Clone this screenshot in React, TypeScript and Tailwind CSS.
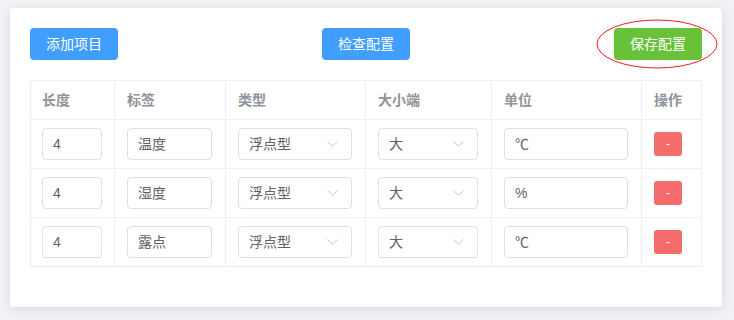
import React from "react";

const rows = [
  { len: "4", label: "温度", type: "浮点型", endian: "大", unit: "℃" },
  { len: "4", label: "湿度", type: "浮点型", endian: "大", unit: "%" },
  { len: "4", label: "露点", type: "浮点型", endian: "大", unit: "℃" },
];

function Chevron() {
  return (
    <svg width="11" height="6" viewBox="0 0 11 6" fill="none" className="shrink-0">
      <path d="M0.5 0.5 L5.5 5.2 L10.5 0.5" stroke="#c0c4cc" strokeWidth="1" />
    </svg>
  );
}

function Input({ value, w }: { value: string; w: string }) {
  return (
    <div className={`${w} h-8 border border-[#dcdfe6] rounded-[4px] flex items-center pl-[10px] text-sm text-[#606266] bg-white`}>
      {value}
    </div>
  );
}

function Select({ value, w }: { value: string; w: string }) {
  return (
    <div className={`${w} h-8 border border-[#dcdfe6] rounded-[4px] flex items-center justify-between pl-[10px] pr-[13px] text-sm text-[#606266] bg-white`}>
      <span>{value}</span>
      <Chevron />
    </div>
  );
}

const cell = "border-r border-b border-[#ebeef5] flex items-center pl-3";

export default function App() {
  return (
    <div className="w-[734px] h-[320px] bg-[#f0f2f5] pt-2 pl-[10px] font-['Liberation_Sans','Noto_Sans_CJK_SC',sans-serif]">
      <div className="relative w-[712px] h-[299px] bg-white rounded-[4px] shadow-[0_2px_12px_0_rgba(0,0,0,0.1)] p-5">
        <div className="flex justify-between items-center">
          <button className="w-[88px] h-8 rounded-[4px] bg-[#409eff] text-white text-sm">添加项目</button>
          <button className="w-[88px] h-8 rounded-[4px] bg-[#409eff] text-white text-sm">检查配置</button>
          <button className="w-[88px] h-8 rounded-[4px] bg-[#67c23a] text-white text-sm">保存配置</button>
        </div>
        <div className="mt-5 grid grid-cols-[84px_111px_140px_126px_150px_60px] border-t border-l border-[#ebeef5]">
          {["长度", "标签", "类型", "大小端", "单位", "操作"].map((h, i) => (
            <div key={h} className={`${cell} h-[39px] text-sm font-bold text-[#909399] ${i === 0 ? "pl-[11px]" : ""}`}>
              {h}
            </div>
          ))}
          {rows.map((r, idx) => (
            <React.Fragment key={idx}>
              <div className={`${cell} h-[49px] pl-[11px]`}>
                <Input value={r.len} w="w-[60px]" />
              </div>
              <div className={`${cell} h-[49px]`}>
                <Input value={r.label} w="w-[85px]" />
              </div>
              <div className={`${cell} h-[49px]`}>
                <Select value={r.type} w="w-[114px]" />
              </div>
              <div className={`${cell} h-[49px]`}>
                <Select value={r.endian} w="w-[100px]" />
              </div>
              <div className={`${cell} h-[49px]`}>
                <Input value={r.unit} w="w-[124px]" />
              </div>
              <div className={`${cell} h-[49px]`}>
                <button className="w-7 h-6 rounded-[3px] bg-[#f56c6c] text-white text-xs leading-none">-</button>
              </div>
            </React.Fragment>
          ))}
        </div>
        <svg className="absolute left-[586px] top-[11px]" width="122" height="50" viewBox="0 0 122 50" fill="none">
          <ellipse cx="61" cy="25" rx="60" ry="24" stroke="#ee1c1c" strokeWidth="1" />
        </svg>
      </div>
    </div>
  );
}
